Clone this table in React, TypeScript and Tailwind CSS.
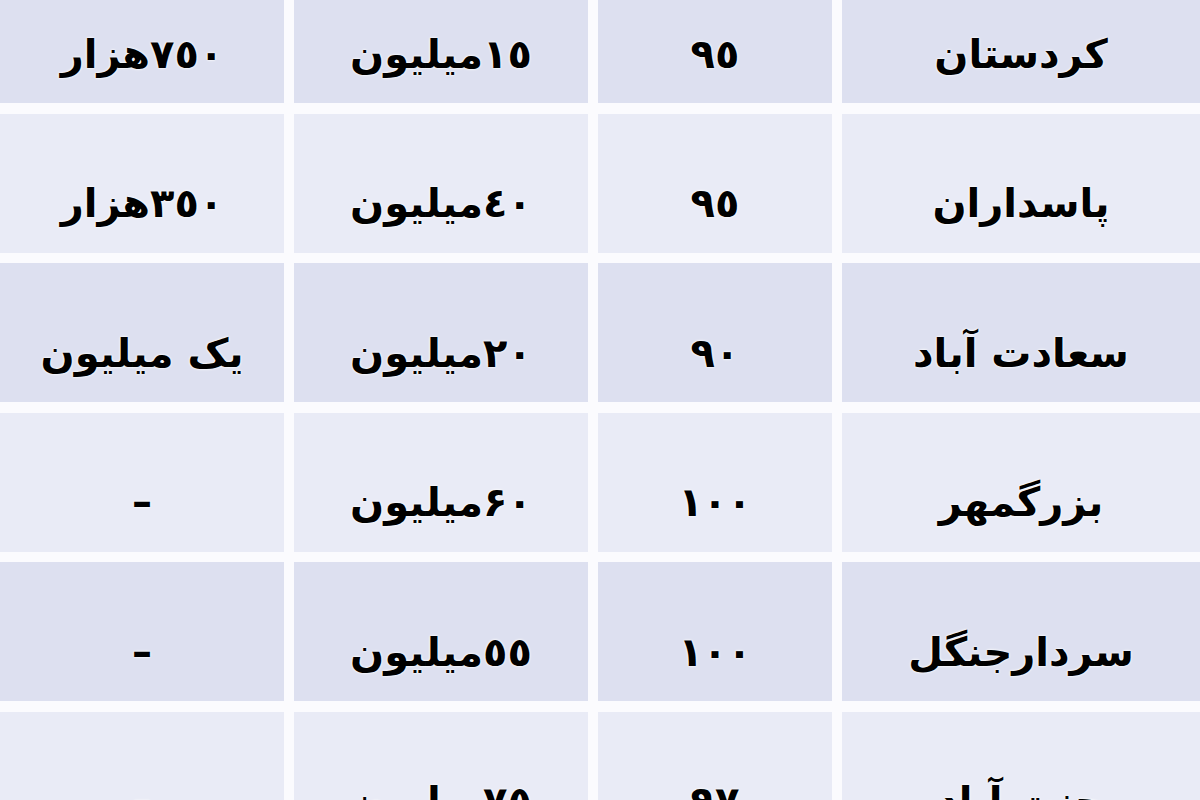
import React from "react";

type Row = { name: string; age: string; price: string; rent: string };

const rows: Row[] = [
  { name: "کردستان", age: "۹٥", price: "۱٥میلیون", rent: "۷٥۰هزار" },
  { name: "پاسداران", age: "۹٥", price: "٤۰میلیون", rent: "۳٥۰هزار" },
  { name: "سعادت آباد", age: "۹۰", price: "۲۰میلیون", rent: "یک میلیون" },
  { name: "بزرگمهر", age: "۱۰۰", price: "۶۰میلیون", rent: "–" },
  { name: "سردارجنگل", age: "۱۰۰", price: "٥٥میلیون", rent: "–" },
  { name: "جنت آباد", age: "۹۷", price: "۷٥میلیون", rent: "–" },
];

function Cell({ children, className }: { children: React.ReactNode; className: string }) {
  return (
    <div
      className={
        "flex items-center justify-center pt-[40px] text-[40px] font-bold text-black [text-shadow:0_0_3px_#ffffff,0_0_2px_#ffffff] " +
        className
      }
    >
      {children}
    </div>
  );
}

export default function App() {
  return (
    <div className="h-[800px] w-[1200px] overflow-hidden bg-[#fbfbfe]">
      <div
        dir="rtl"
        className="-mt-[36px] flex flex-col gap-[10.5px] font-['DejaVu_Sans',sans-serif]"
      >
        {rows.map((r, i) => {
          const bg = i % 2 === 0 ? "bg-[#dde0f0]" : "bg-[#e9ebf6]";
          return (
            <div key={i} className="flex h-[139px] shrink-0 gap-[10px]">
              <Cell className={"w-[358px] " + bg}>{r.name}</Cell>
              <Cell className={"w-[234px] " + bg}>{r.age}</Cell>
              <Cell className={"w-[294px] " + bg}>{r.price}</Cell>
              <Cell className={"flex-1 " + bg}>{r.rent}</Cell>
            </div>
          );
        })}
      </div>
    </div>
  );
}
